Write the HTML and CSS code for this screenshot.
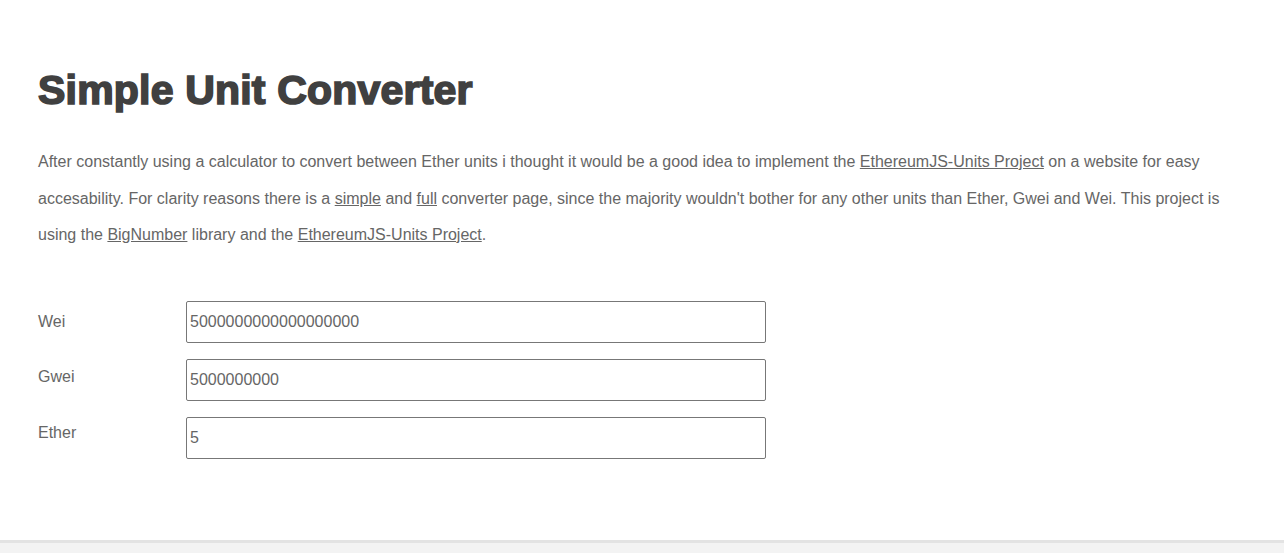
FILE: index.html
```html
<!DOCTYPE html>
<html lang="en">
<head>
<meta charset="utf-8">
<title>Simple Unit Converter</title>
<link rel="stylesheet" href="styles.css">
</head>
<body>
<main class="page">
  <h1 class="title">Simple Unit Converter</h1>
  <p class="intro">After constantly using a calculator to convert between Ether units i thought it would be a good idea to implement the <a href="#">EthereumJS-Units Project</a> on a website for easy accesability. For clarity reasons there is a <a href="#">simple</a> and <a href="#">full</a> converter page, since the majority wouldn't bother for any other units than Ether, Gwei and Wei. This project is using the <a href="#">BigNumber</a> library and the <a href="#">EthereumJS-Units Project</a>.</p>
  <form class="converter">
    <div class="labels">
      <label class="label" for="wei">Wei</label>
      <label class="label" for="gwei">Gwei</label>
      <label class="label" for="ether">Ether</label>
    </div>
    <div class="inputs">
      <input class="field" id="wei" type="text" value="5000000000000000000">
      <input class="field" id="gwei" type="text" value="5000000000">
      <input class="field" id="ether" type="text" value="5">
    </div>
  </form>
</main>
<footer class="footer"></footer>
</body>
</html>
```

FILE: styles.css
```css
html, body {
  margin: 0;
  padding: 0;
  background: #fff;
}
body {
  font-family: "Liberation Sans", Arial, sans-serif;
  color: #666;
  display: flex;
  flex-direction: column;
  min-height: 100vh;
}
.page {
  padding: 66px 38px 0;
  height: 474px;
  box-sizing: border-box;
}
.title {
  margin: 0;
  font-size: 41px;
  line-height: 48px;
  font-weight: bold;
  color: #404040;
  -webkit-text-stroke: 1.7px #404040;
  letter-spacing: 0.2px;
}
.intro {
  margin: 30px 0 0;
  font-size: 16px;
  line-height: 36.5px;
  color: #666;
}
.intro a {
  color: #666;
  text-decoration: underline;
}
.converter {
  display: flex;
  margin-top: 47px;
}
.labels {
  width: 148px;
  display: flex;
  flex-direction: column;
  margin-top: -7px;
}
.label {
  font-size: 16px;
  line-height: 55.5px;
  color: #666;
}
.inputs {
  display: flex;
  flex-direction: column;
  gap: 16px;
}
.field {
  width: 580px;
  height: 42px;
  box-sizing: border-box;
  border: 1px solid #777;
  border-radius: 2px;
  padding: 0 3px;
  font-family: "Liberation Sans", Arial, sans-serif;
  font-size: 16px;
  color: #666;
  background: #fff;
  outline: none;
}
.footer {
  flex: 1;
  margin-top: 66px;
  background: #f3f3f3;
  border-top: 3px solid #e3e3e3;
}
```
